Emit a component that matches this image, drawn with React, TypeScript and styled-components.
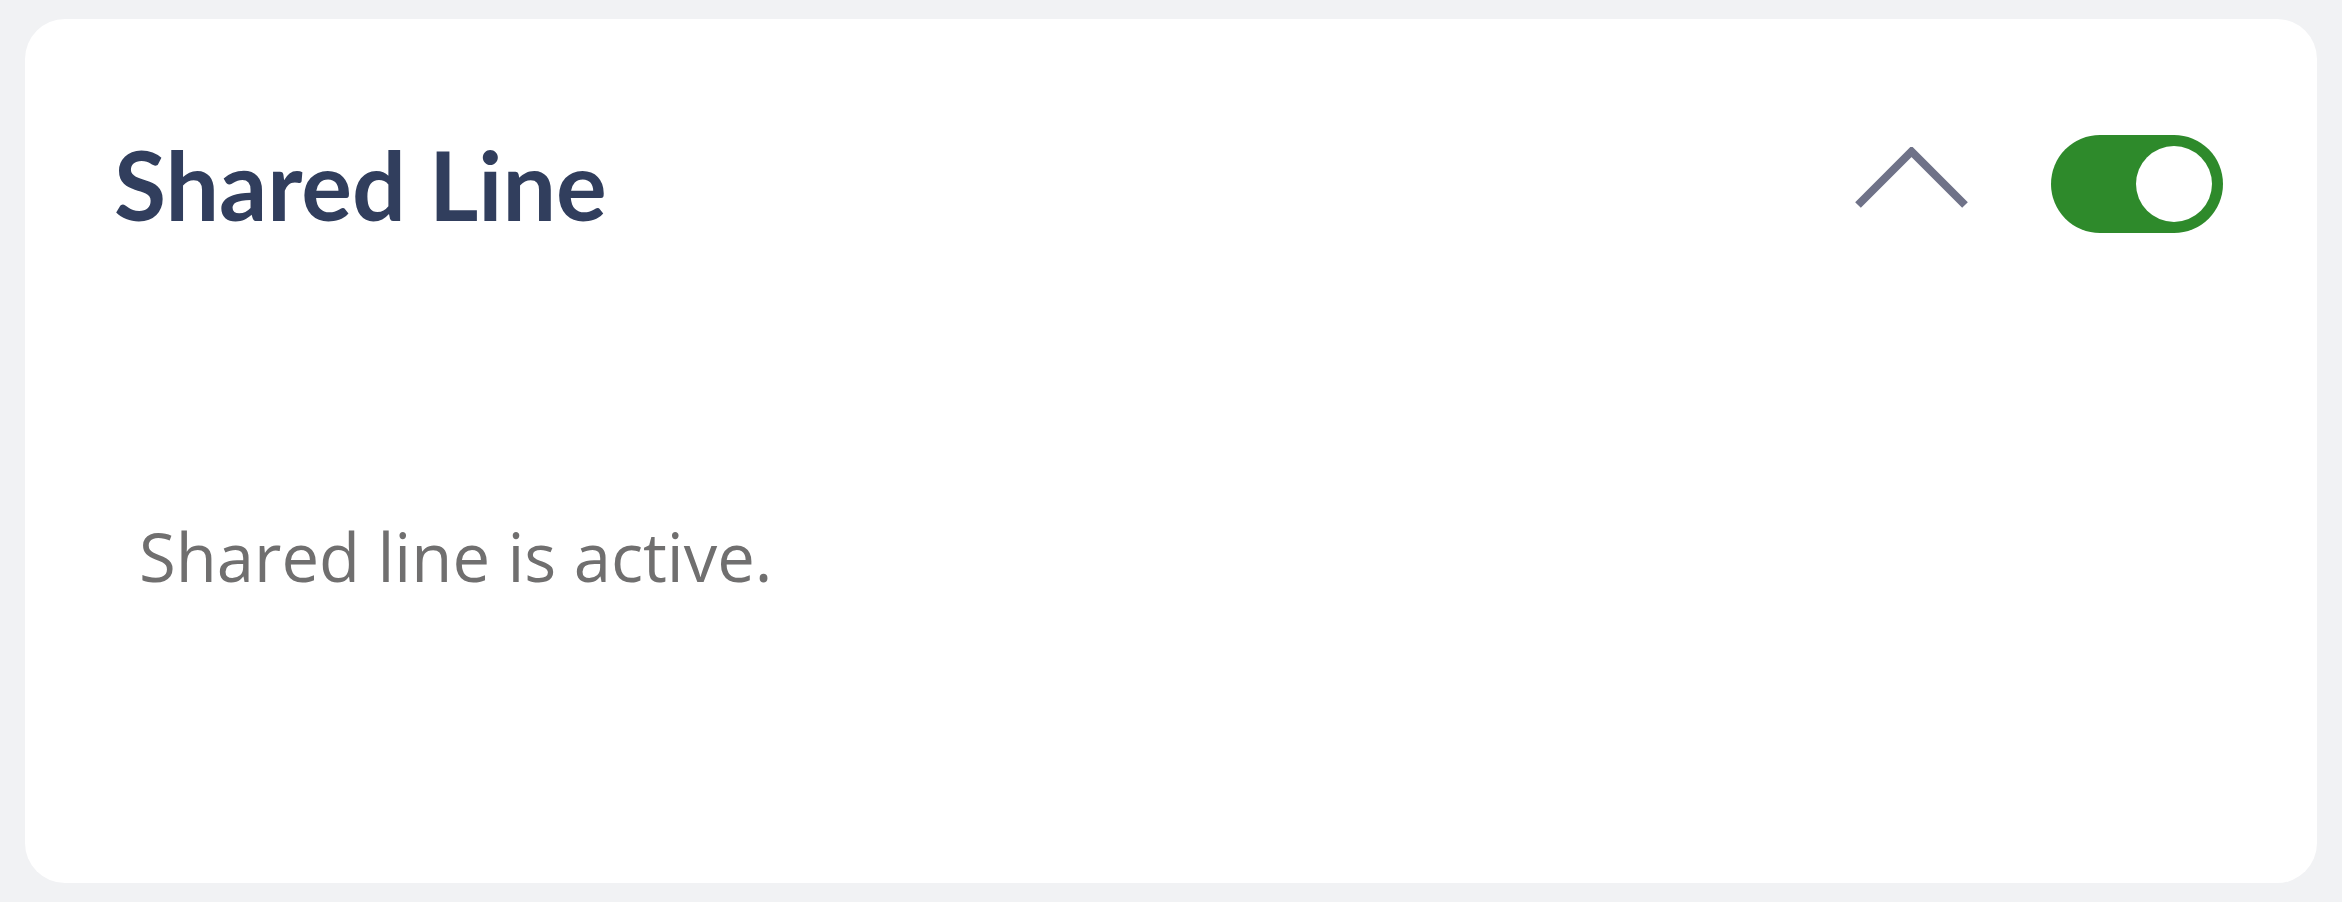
import React from "react";
import styled, { createGlobalStyle } from "styled-components";

const GlobalStyle = createGlobalStyle`
  html, body {
    margin: 0;
    padding: 0;
    background: #f1f2f4;
  }
  * {
    box-sizing: border-box;
  }
`;

//#region
const Page = styled.div`
  width: 2342px;
  height: 902px;
  padding: 19px 25px;
  background: #f1f2f4;
`;

const Card = styled.section`
  height: 864px;
  background: #ffffff;
  border-radius: 40px;
  padding-top: 100px;
`;

const Header = styled.div`
  display: flex;
  align-items: center;
  justify-content: space-between;
  height: 130px;
  padding: 0 94px 0 89px;
`;

const Title = styled.h2`
  margin: 0;
  font-family: Lato, "Open Sans", sans-serif;
  font-size: 95px;
  font-weight: 700;
  line-height: 130px;
  color: #313e5d;
`;

const Actions = styled.div`
  display: flex;
  align-items: center;
  gap: 82px;
`;

const ChevronButton = styled.button`
  display: flex;
  align-items: center;
  justify-content: center;
  padding: 0;
  margin-top: -12px;
  border: none;
  background: none;
  color: #6f7288;
  cursor: pointer;
`;

const Toggle = styled.button<{ $on: boolean }>`
  position: relative;
  width: 172px;
  height: 98px;
  padding: 0;
  border: none;
  border-radius: 49px;
  background: ${(p) => (p.$on ? "#2e8a2b" : "#c9ccd3")};
  cursor: pointer;
`;

const Knob = styled.span<{ $on: boolean }>`
  position: absolute;
  top: 11px;
  left: ${(p) => (p.$on ? "85px" : "11px")};
  width: 76px;
  height: 76px;
  border-radius: 50%;
  background: #ffffff;
`;

const Body = styled.p`
  margin: 260px 0 0;
  padding-left: 114px;
  font-family: "Open Sans", "Noto Sans", sans-serif;
  font-size: 67px;
  line-height: 94px;
  color: #706f6f;
`;
//#endregion

const ChevronUp = () => (
  <svg width="115" height="62" viewBox="0 0 115 62" fill="none">
    <path
      d="M4 58 L57.5 4.5 L111 58"
      stroke="currentColor"
      strokeWidth="8"
      strokeLinecap="butt"
      strokeLinejoin="miter"
    />
  </svg>
);

const App = () => {
  const [on, setOn] = React.useState(true);

  return (
    <>
      <GlobalStyle />
      <Page>
        <Card>
          <Header>
            <Title>Shared Line</Title>
            <Actions>
              <ChevronButton aria-label="Collapse">
                <ChevronUp />
              </ChevronButton>
              <Toggle $on={on} onClick={() => setOn(!on)} aria-label="Shared line">
                <Knob $on={on} />
              </Toggle>
            </Actions>
          </Header>
          <Body>Shared line is active.</Body>
        </Card>
      </Page>
    </>
  );
};

export default App;
